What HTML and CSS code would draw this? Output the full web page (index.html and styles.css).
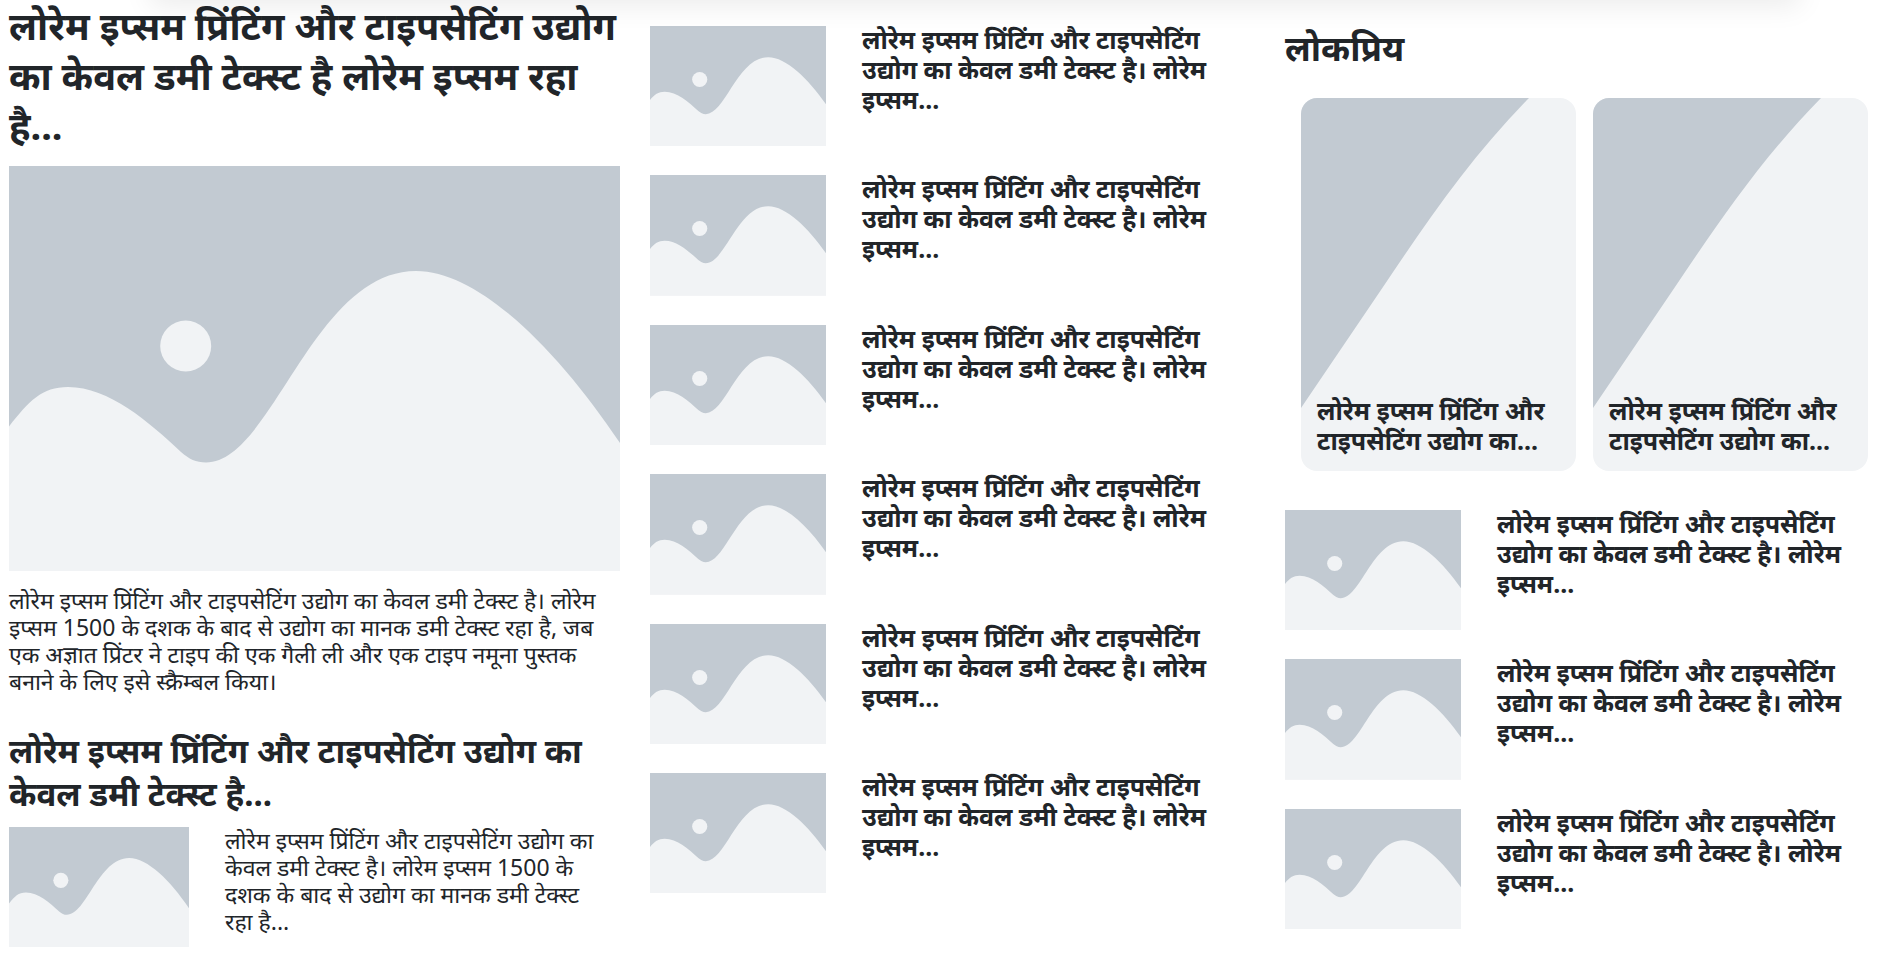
FILE: index.html
```html
<!DOCTYPE html>
<html lang="hi">
<head>
<meta charset="utf-8">
<meta name="viewport" content="width=device-width, initial-scale=1">
<title>लोरेम इप्सम</title>
<link rel="stylesheet" href="styles.css">
</head>
<body>
<svg class="defs" aria-hidden="true">
  <symbol id="landscape" viewBox="0 0 611 405" preserveAspectRatio="xMidYMid slice">
    <rect width="611" height="405" fill="#c2cad2"/>
    <path fill="#f1f3f5" d="M0 260.500C20 235 33 221 59 221C100 221 140 256 172 286C180 293 187 296.500 197 296.500C263 296.500 304 105 407 105C470 105 548 183 611 277V405H0Z"/>
    <circle cx="176.700" cy="180" r="25.500" fill="#f1f3f5"/>
  </symbol>
  <symbol id="slope" viewBox="0 0 275 373" preserveAspectRatio="xMidYMid slice">
    <rect width="275" height="373" fill="#f1f3f5"/>
    <path fill="#c2cad2" d="M0 0H228C169 60 125 125 82 189L0 310Z"/>
  </symbol>
</svg>
<header class="topbar"></header>
<main class="page">
  <section class="lead">
    <article>
      <h1 class="lead-title">लोरेम इप्सम प्रिंटिंग और टाइपसेटिंग उद्योग का केवल डमी टेक्स्ट है लोरेम इप्सम रहा है...</h1>
      <svg class="lead-image" role="img" aria-label="चित्र"><use href="#landscape"/></svg>
      <p class="lead-text">लोरेम इप्सम प्रिंटिंग और टाइपसेटिंग उद्योग का केवल डमी टेक्स्ट है। लोरेम इप्सम 1500 के दशक के बाद से उद्योग का मानक डमी टेक्स्ट रहा है, जब एक अज्ञात प्रिंटर ने टाइप की एक गैली ली और एक टाइप नमूना पुस्तक बनाने&nbsp;के&nbsp;लिए इसे स्क्रैम्बल किया।</p>
    </article>
    <article>
      <h2 class="sub-title">लोरेम इप्सम प्रिंटिंग और टाइपसेटिंग उद्योग का केवल डमी टेक्स्ट है...</h2>
      <div class="sub-row">
        <svg class="sub-thumb" role="img" aria-label="चित्र"><use href="#landscape"/></svg>
        <p class="text">लोरेम इप्सम प्रिंटिंग और टाइपसेटिंग उद्योग का केवल डमी टेक्स्ट है। लोरेम इप्सम 1500 के दशक के बाद से उद्योग का मानक डमी टेक्स्ट रहा&nbsp;है...</p>
      </div>
    </article>
  </section>

  <section class="latest list">
    <article class="item"><svg class="thumb" role="img" aria-label="चित्र"><use href="#landscape"/></svg><h3 class="item-title">लोरेम इप्सम प्रिंटिंग और टाइपसेटिंग उद्योग का केवल डमी टेक्स्ट है। लोरेम इप्सम...</h3></article>
    <article class="item"><svg class="thumb" role="img" aria-label="चित्र"><use href="#landscape"/></svg><h3 class="item-title">लोरेम इप्सम प्रिंटिंग और टाइपसेटिंग उद्योग का केवल डमी टेक्स्ट है। लोरेम इप्सम...</h3></article>
    <article class="item"><svg class="thumb" role="img" aria-label="चित्र"><use href="#landscape"/></svg><h3 class="item-title">लोरेम इप्सम प्रिंटिंग और टाइपसेटिंग उद्योग का केवल डमी टेक्स्ट है। लोरेम इप्सम...</h3></article>
    <article class="item"><svg class="thumb" role="img" aria-label="चित्र"><use href="#landscape"/></svg><h3 class="item-title">लोरेम इप्सम प्रिंटिंग और टाइपसेटिंग उद्योग का केवल डमी टेक्स्ट है। लोरेम इप्सम...</h3></article>
    <article class="item"><svg class="thumb" role="img" aria-label="चित्र"><use href="#landscape"/></svg><h3 class="item-title">लोरेम इप्सम प्रिंटिंग और टाइपसेटिंग उद्योग का केवल डमी टेक्स्ट है। लोरेम इप्सम...</h3></article>
    <article class="item"><svg class="thumb" role="img" aria-label="चित्र"><use href="#landscape"/></svg><h3 class="item-title">लोरेम इप्सम प्रिंटिंग और टाइपसेटिंग उद्योग का केवल डमी टेक्स्ट है। लोरेम इप्सम...</h3></article>
  </section>

  <section class="popular">
    <h2 class="popular-title">लोकप्रिय</h2>
    <div class="cards">
      <article class="card"><svg class="card-image" role="img" aria-label="चित्र"><use href="#slope"/></svg><h3 class="card-title">लोरेम इप्सम प्रिंटिंग और टाइपसेटिंग उद्योग का...</h3></article>
      <article class="card"><svg class="card-image" role="img" aria-label="चित्र"><use href="#slope"/></svg><h3 class="card-title">लोरेम इप्सम प्रिंटिंग और टाइपसेटिंग उद्योग का...</h3></article>
    </div>
    <div class="list">
      <article class="item"><svg class="thumb" role="img" aria-label="चित्र"><use href="#landscape"/></svg><h3 class="item-title">लोरेम इप्सम प्रिंटिंग और टाइपसेटिंग उद्योग का केवल डमी टेक्स्ट है। लोरेम इप्सम...</h3></article>
      <article class="item"><svg class="thumb" role="img" aria-label="चित्र"><use href="#landscape"/></svg><h3 class="item-title">लोरेम इप्सम प्रिंटिंग और टाइपसेटिंग उद्योग का केवल डमी टेक्स्ट है। लोरेम इप्सम...</h3></article>
      <article class="item"><svg class="thumb" role="img" aria-label="चित्र"><use href="#landscape"/></svg><h3 class="item-title">लोरेम इप्सम प्रिंटिंग और टाइपसेटिंग उद्योग का केवल डमी टेक्स्ट है। लोरेम इप्सम...</h3></article>
    </div>
  </section>
</main>
</body>
</html>
```
FILE: styles.css
```css
* { box-sizing: border-box; }
body {
  margin: 0;
  background: #fff;
  color: #212529;
  font-family: "Noto Sans", sans-serif;
  font-size: 23px;
  line-height: 27px;
}
h1, h2, h3, p { margin: 0; }
svg { display: block; width: 100%; }
.defs { position: absolute; width: 0; height: 0; }

/* Shadow cast by the bar above the page */
.topbar {
  position: absolute;
  top: -60px;
  left: 150px;
  right: 100px;
  height: 60px;
  box-shadow: 0 6px 28px rgba(0, 0, 0, 0.08);
  pointer-events: none;
}

.page {
  display: grid;
  grid-template-columns: 611fr 605fr 605fr;
  gap: 30px;
  padding: 0 10px 0 9px;
}

.lead-title { font-size: 38px; line-height: 50px; }
.lead-image { aspect-ratio: 611 / 405; margin-top: 16px; }
.lead-text { margin-top: 16px; }
.sub-title { font-size: 33px; line-height: 43px; margin-top: 34px; }
.sub-row {
  display: grid;
  grid-template-columns: 180fr 395fr;
  gap: 36px;
  align-items: start;
  margin-top: 12px;
}
.sub-thumb { aspect-ratio: 3 / 2; }

.list { display: flex; flex-direction: column; gap: 29px; }
.latest { padding-top: 26px; }
.item {
  display: grid;
  grid-template-columns: 176fr 393fr;
  gap: 36px;
  align-items: start;
}
.thumb { aspect-ratio: 19 / 13; }
.item-title, .card-title { font-size: 25px; line-height: 30px; }
.item-title { margin-top: -2px; }

.popular { padding-top: 26px; }
.popular-title { font-size: 35px; line-height: 43px; }
.cards {
  display: grid;
  grid-template-columns: 1fr 1fr;
  gap: 17px;
  margin: 29px 0 39px;
  padding: 0 22px 0 16px;
}
.card { position: relative; border-radius: 16px; overflow: hidden; }
.card-image { aspect-ratio: 275 / 373; }
.card-title { position: absolute; left: 16px; right: 16px; bottom: 16px; }
```
